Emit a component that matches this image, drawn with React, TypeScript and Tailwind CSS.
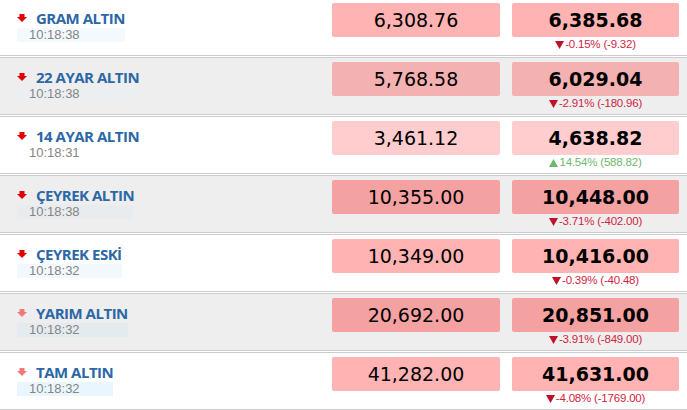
const rows = [
  { name: "GRAM ALTIN", time: "10:18:38", buy: "6,308.76", sell: "6,385.68", pct: "-0.15%", diff: "(-9.32)", up: false, box: "bg-[#ffb3b3]", stamp: "bg-[#f3f9fd]", arrow: "#e00000" },
  { name: "22 AYAR ALTIN", time: "10:18:38", buy: "5,768.58", sell: "6,029.04", pct: "-2.91%", diff: "(-180.96)", up: false, box: "bg-[#f4b1b1]", stamp: "bg-[#eceff1]", arrow: "#e00000" },
  { name: "14 AYAR ALTIN", time: "10:18:31", buy: "3,461.12", sell: "4,638.82", pct: "14.54%", diff: "(588.82)", up: true, box: "bg-[#ffcdcd]", stamp: "bg-white", arrow: "#e00000" },
  { name: "ÇEYREK ALTIN", time: "10:18:38", buy: "10,355.00", sell: "10,448.00", pct: "-3.71%", diff: "(-402.00)", up: false, box: "bg-[#f4a1a1]", stamp: "bg-[#e8ecef]", arrow: "#e00000" },
  { name: "ÇEYREK ESKİ", time: "10:18:32", buy: "10,349.00", sell: "10,416.00", pct: "-0.39%", diff: "(-40.48)", up: false, box: "bg-[#ffb3b3]", stamp: "bg-[#f3f8fc]", arrow: "#e00000" },
  { name: "YARIM ALTIN", time: "10:18:32", buy: "20,692.00", sell: "20,851.00", pct: "-3.91%", diff: "(-849.00)", up: false, box: "bg-[#f4a1a1]", stamp: "bg-[#e4ebef]", arrow: "#f07a7a" },
  { name: "TAM ALTIN", time: "10:18:32", buy: "41,282.00", sell: "41,631.00", pct: "-4.08%", diff: "(-1769.00)", up: false, box: "bg-[#ffb3b3]", stamp: "bg-[#eaf6fd]", arrow: "#f07a7a" },
]

function DownArrow({ color }: { color: string }) {
  return (
    <svg width="10" height="8" viewBox="0 0 10 8" className="shrink-0">
      <rect x="2.5" y="0" width="5" height="3.5" fill={color} />
      <polygon points="0,3 10,3 5,8" fill={color} />
    </svg>
  )
}

function Tri({ up, color }: { up: boolean; color: string }) {
  return (
    <svg width="9" height="8" viewBox="0 0 9 8" className="mr-px inline-block align-[-1px]">
      <polygon points={up ? "0,8 9,8 4.5,0" : "0,0 9,0 4.5,8"} fill={color} />
    </svg>
  )
}

export default function App() {
  return (
    <div className="-mt-[2px] flex w-[687px] flex-col gap-px bg-white">
      {rows.map((r, i) => (
        <div
          key={r.name}
          className={
            "flex h-[58px] border-y border-[#cccccc] " +
            (i % 2 === 1 ? "bg-[#eeeeee]" : "bg-white")
          }
        >
          <div className="flex-1 pl-[17px] pt-[10px]">
            <div className="inline-block">
              <div className="flex h-[18px] items-center">
                <DownArrow color={r.arrow} />
                <span className="ml-[9px] font-['Open_Sans',sans-serif] text-[15px] font-bold leading-[18px] tracking-[-0.5px] text-[#2c67a6]">
                  {r.name}
                </span>
              </div>
              <div
                className={
                  "mt-px h-[14px] pl-[12px] font-['Liberation_Sans',sans-serif] text-[13px] leading-[14px] text-[#858585] " +
                  r.stamp
                }
              >
                {r.time}
              </div>
            </div>
          </div>
          <div className="flex gap-[12px] pr-[8px] pt-[4px]">
            <div
              className={
                "flex h-[34px] w-[168px] items-center justify-center rounded-[2px] font-['DejaVu_Sans',sans-serif] text-[19px] text-black " +
                r.box
              }
            >
              {r.buy}
            </div>
            <div className="flex w-[167px] flex-col items-center">
              <div
                className={
                  "flex h-[34px] w-full items-center justify-center rounded-[2px] font-['DejaVu_Sans',sans-serif] text-[19px] font-bold text-black " +
                  r.box
                }
              >
                {r.sell}
              </div>
              <div
                className={
                  "mt-px whitespace-nowrap font-['Liberation_Sans',sans-serif] text-[11.5px] leading-[13px] tracking-[-0.2px] " +
                  (r.up ? "text-[#6cb86c]" : "text-[#d0243e]")
                }
              >
                <Tri up={r.up} color={r.up ? "#6cb86c" : "#c0102a"} />
                {r.pct} {r.diff}
              </div>
            </div>
          </div>
        </div>
      ))}
    </div>
  )
}
